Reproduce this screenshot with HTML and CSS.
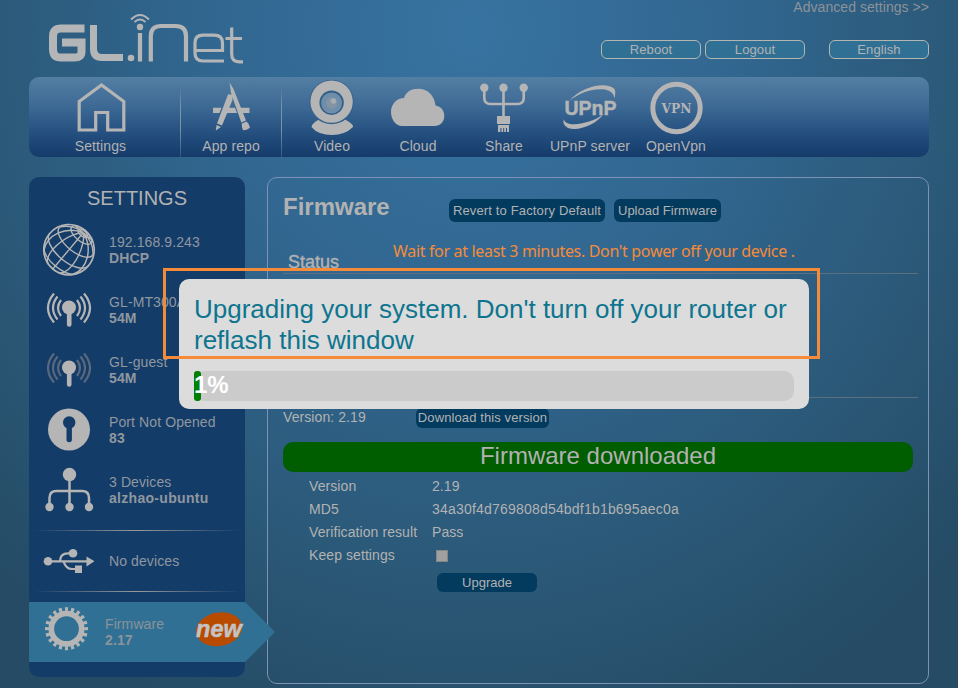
FILE: index.html
```html
<!DOCTYPE html>
<html lang="en">
<head>
<meta charset="utf-8">
<title>GL.iNet Firmware</title>
<link rel="stylesheet" href="styles.css">
</head>
<body>
<div class="page">
  <header class="header">
    <svg class="logo" viewBox="46 10 200 56" width="200" height="56" fill="none" stroke="#b4b5b6">
      <path stroke-width="8" d="M84.500 28.500H61Q53 28.500 53 37V49Q53 57.500 61 57.500H74Q81.500 57.500 81.500 51.500V42.500H62"/>
      <path stroke-width="7" d="M93.500 25V49Q93.500 57.500 102 57.500H123"/>
      <circle cx="131" cy="58" r="3.300" fill="#b4b5b6" stroke="none"/>
      <circle cx="140" cy="27" r="3.200" fill="#b4b5b6" stroke="none"/>
      <path stroke-width="4.200" d="M140 33V61.500M150.800 61.500V36Q150.800 26 161 26H175.500Q186 26 186 36V61.500"/>
      <path stroke-width="1.800" d="M131 19.500Q140 10.500 149 19.500M134.500 22Q140 17 145.500 22"/>
      <path stroke-width="3.200" d="M224 61H203Q195 61 195 53V43Q195 35.200 203 35.200H214Q222.500 35.200 222.500 43V50.500H195M231.700 27.500V54Q231.700 61.800 239 61.800H243M225.500 38.500H242"/>
    </svg>
    <div class="header-right">
      <a class="advanced">Advanced settings &gt;&gt;</a>
      <div class="top-buttons">
        <button class="outline-btn">Reboot</button>
        <button class="outline-btn">Logout</button>
        <button class="outline-btn language">English</button>
      </div>
    </div>
  </header>

  <nav class="nav">
    <a class="nav-item nav-settings">
      <svg viewBox="57 80 86 57" width="86" height="57"><path d="M78.200 130V101.500L100.500 85L122.800 101.500V130H106.700V112.500H94.700V130Z" fill="none" stroke="#b5b5b5" stroke-width="3.200"/></svg>
      <span>Settings</span>
    </a>
    <a class="nav-item nav-apps">
      <svg viewBox="188 80 86 57" width="86" height="57" fill="#b5b5b5"><path d="M213 107.800H221.500L219.500 113H213ZM227.500 107.800H235L237 113H225.500ZM240 107.800H249.500V113H242.200Z"/><path d="M228 94.500Q230.500 93.500 232.300 95.500L232.500 100L222 125.500L217 123.500ZM216.500 125L221 127L215.800 130.500ZM229.600 82.500L233.500 89L246 120.500L241.300 122.500L231 93ZM241.800 123.500L246.500 121.500Q249.500 124 250 127.500Q248 130 243 130.300Q241.500 128 241.800 123.500Z"/></svg>
      <span>App repo</span>
    </a>
    <a class="nav-item">
      <svg viewBox="289 80 86 57" width="86" height="57"><path d="M319 119.500Q332 127 345 119.500Q354 124.500 353 127Q345 135 332 135Q318 135 311.500 127Q312 123 319 119.500Z" fill="#b5b5b5"/><circle cx="331.600" cy="102" r="22.200" fill="#36618c"/><circle cx="331.600" cy="101.600" r="21.200" fill="#b5b5b5"/><circle cx="331.600" cy="102.700" r="12.200" fill="#315f89"/><circle cx="331.600" cy="103" r="10.500" fill="#708da9"/><circle cx="331.600" cy="103" r="5.500" fill="#8294a5"/><circle cx="333.500" cy="101" r="2.800" fill="#a7aeb3"/></svg>
      <span>Video</span>
    </a>
    <a class="nav-item">
      <svg viewBox="375 80 86 57" width="86" height="57"><path d="M402 126C395.500 126 391 119 391 112C391 104 397 98 404 98C406 92 411 88.800 418.500 88.800C428 88.800 434.500 96 435.500 105.500C441 106 444.300 111 444.300 116C444.300 122 440 126 434.500 126Z" fill="#b5b5b5"/></svg>
      <span>Cloud</span>
    </a>
    <a class="nav-item">
      <svg viewBox="461 80 86 57" width="86" height="57" fill="#b5b5b5"><circle cx="484.300" cy="87.700" r="4.200"/><circle cx="503.500" cy="87.700" r="4.200"/><circle cx="523.700" cy="87.700" r="4.200"/><path d="M484.300 90V98Q484.300 104 490.500 104H517.500Q523.700 104 523.700 98V90M503.500 90V117" fill="none" stroke="#b5b5b5" stroke-width="2.600"/><path d="M497 116H510V124H497ZM498 125H509V132H507V128H506V132H504.200V128H503.200V132H501.400V128H500.400V132H498Z"/></svg>
      <span>Share</span>
    </a>
    <a class="nav-item">
      <svg viewBox="547 80 86 57" width="86" height="57" fill="#b5b5b5"><path d="M569.500 101C580 87 606 80.500 614.500 89Q616 92 614.500 98.500Q614 91.500 605 89.500C593 88 580 92 569.500 101ZM563.800 119C565 126 578 125 589 121.500Q598 118.500 603.500 114C596 125 578 131.500 568 128Q562 125 563.800 119Z"/><text class="upnp" x="564.500" y="115" textLength="52" lengthAdjust="spacingAndGlyphs">UPnP</text></svg>
      <span>UPnP server</span>
    </a>
    <a class="nav-item">
      <svg viewBox="633 80 86 57" width="86" height="57" fill="#b5b5b5"><circle cx="676.500" cy="108" r="23.700" fill="none" stroke="#b5b5b5" stroke-width="5"/><text class="vpn" x="661.500" y="112.700" textLength="30" lengthAdjust="spacingAndGlyphs">VPN</text></svg>
      <span>OpenVpn</span>
    </a>
  </nav>

  <div class="columns">
    <aside class="sidebar">
      <h2>SETTINGS</h2>
      <div class="row">
        <svg viewBox="29 220 80 60" width="80" height="60">
          <g transform="translate(69 249.700) rotate(-50)" fill="none" stroke="#b5b5b5" stroke-width="1.400">
            <circle r="25.200" stroke-width="1.700"/>
            <ellipse cx="19.200" rx="5.900" ry="12.600"/>
            <ellipse cx="21.400" rx="2.800" ry="5.500"/>
            <path d="M11.100 -21.800A10.200 21.800 0 0 0 11.100 21.800M0 -25.200A11.800 25.200 0 0 0 0 25.200M-14.200 -20.800A10.200 21.800 0 0 0 -14.200 20.800M22.200 0H-25.200"/>
            <path id="meridians" d="M22.200 0Q19.500 3.400 14.100 6.300Q8.800 9.200 2.200 10.900Q-4.200 12.600 -10.200 12.600Q-16.200 12.600 -19.900 10.900Q-23.700 9.200 -24.300 6.300M22.200 0Q20.600 5.800 16.300 10.900Q11.900 15.900 6 18.900Q0 21.800 -5.900 21.800Q-11.800 21.800 -16.200 18.900M22.200 0Q22.200 6.800 19.200 12.600Q16.200 18.400 11.100 21.800M22.200 0L22.300 10.500"/>
            <use href="#meridians" transform="scale(1 -1)"/>
          </g>
        </svg>
        <p>192.168.9.243<b>DHCP</b></p>
      </div>
      <div class="row">
        <svg viewBox="29 280 80 60" width="80" height="60" fill="none" stroke="#b5b5b5" stroke-width="2.200"><g><path d="M54 293.500Q42 308 54 322.500M57.500 296.500Q48.500 308 57.500 319.500M61 300Q55 308 61 316M84 293.500Q96 308 84 322.500M80.500 296.500Q89.500 308 80.500 319.500M77 300Q83 308 77 316"/></g><circle cx="69" cy="307.500" r="7" fill="#b5b5b5" stroke="none"/><path d="M69.200 309V324.500" stroke-width="4.600" stroke-linecap="round"/></svg>
        <p>GL-MT300A<b>54M</b></p>
      </div>
      <div class="row">
        <svg viewBox="29 280 80 60" width="80" height="60" fill="none" stroke="#b5b5b5" stroke-width="2.200"><g stroke="#58687d"><path d="M54 293.500Q42 308 54 322.500M57.500 296.500Q48.500 308 57.500 319.500M61 300Q55 308 61 316M84 293.500Q96 308 84 322.500M80.500 296.500Q89.500 308 80.500 319.500M77 300Q83 308 77 316"/></g><circle cx="69" cy="307.500" r="7" fill="#b5b5b5" stroke="none"/><path d="M69.200 309V324.500" stroke-width="4.600" stroke-linecap="round"/></svg>
        <p>GL-guest<b>54M</b></p>
      </div>
      <div class="row">
        <svg viewBox="29 400 80 60" width="80" height="60"><circle cx="69" cy="429.500" r="21" fill="#b5b5b5"/><circle cx="69.200" cy="422.500" r="6.200" fill="#143c69"/><path d="M69.200 424V439.500" stroke="#143c69" stroke-width="5.400" stroke-linecap="round"/></svg>
        <p>Port Not Opened<b>83</b></p>
      </div>
      <div class="row">
        <svg viewBox="29 460 80 60" width="80" height="60" fill="#b5b5b5"><circle cx="69.500" cy="474.500" r="6.700"/><circle cx="49.500" cy="507" r="4.200"/><circle cx="69.500" cy="507" r="4.200"/><circle cx="89" cy="507" r="4.200"/><path d="M69.500 475V506M49.500 506V498Q49.500 491 56.500 491H82Q89 491 89 498V506" fill="none" stroke="#b5b5b5" stroke-width="2.500"/></svg>
        <p>3 Devices<b class="host">alzhao-ubuntu</b></p>
      </div>
      <div class="rule rule-first"></div>
      <div class="row usb">
        <svg viewBox="29 531 80 60" width="80" height="60" fill="#b5b5b5"><circle cx="48" cy="561.300" r="4.300"/><circle cx="73" cy="553.300" r="4.300"/><path d="M75 565.500H82V573H75ZM86.500 556.500L94.500 561.300L86.500 566.500Z"/><path d="M48 561.300H88M60 561.300C60 556 63 553.300 68 553.300H72M63.500 561.300C65 566 67 569 72 569H76" fill="none" stroke="#b5b5b5" stroke-width="2.200"/></svg>
        <p>No devices</p>
      </div>
      <div class="rule"></div>
      <div class="row active">
        <svg viewBox="29 602 76 60" width="76" height="60" fill="none" stroke="#b5b5b5"><circle cx="66.500" cy="628.700" r="15.200" stroke-width="5.600"/><circle cx="66.500" cy="628.700" r="19.300" pathLength="120" stroke-width="4.400" stroke-dasharray="3 3" stroke-dashoffset="1.500"/></svg>
        <p>Firmware<b>2.17</b></p>
        <svg class="new" viewBox="193 610 52 38" width="52" height="38"><ellipse cx="219" cy="629.300" rx="23.300" ry="16.700" transform="rotate(-10 219 629.300)" fill="#b94b00"/><text class="new-text" x="196" y="637" textLength="46" lengthAdjust="spacingAndGlyphs">new</text></svg>
      </div>
    </aside>

    <main class="panel">
      <div class="title-line">
        <h1>Firmware</h1>
        <button class="btn revert">Revert to Factory Default</button>
        <button class="btn upload">Upload Firmware</button>
      </div>
      <div class="status-line">
        <h3>Status</h3>
        <span class="warning">Wait for at least 3 minutes. Don't power off your device .</span>
      </div>
      <div class="section"></div>
      <div class="version-line"><span>Version: 2.19</span><button class="btn download">Download this version</button></div>
      <div class="downloaded">Firmware downloaded</div>
      <dl class="details">
        <dt>Version</dt><dd>2.19</dd>
        <dt>MD5</dt><dd class="md5">34a30f4d769808d54bdf1b1b695aec0a</dd>
        <dt>Verification result</dt><dd>Pass</dd>
        <dt>Keep settings</dt><dd><i class="check"></i></dd>
      </dl>
      <button class="btn upgrade">Upgrade</button>
    </main>
  </div>
</div>

<div class="dialog">
  <p>Upgrading your system. Don't turn off your router or<br>reflash this window</p>
  <div class="progress"><div class="bar"></div><span>1%</span></div>
</div>
<div class="highlight"></div>
</body>
</html>
```
FILE: styles.css
```css
* { box-sizing: border-box; }
body {
  margin: 0;
  width: 958px;
  height: 688px;
  overflow: hidden;
  position: relative;
  font: 14px/16px "Liberation Sans", sans-serif;
  color: #b2b2b2;
  background: radial-gradient(ellipse 680px 750px at 470px 30px, #3773a1 0%, #31668f 40%, #2a5775 76%, #254b65 100%);
}
h1, h2, h3, p, dl, dd { margin: 0; }
button { font: inherit; color: inherit; padding: 0; border: 0; white-space: nowrap; }
svg { display: block; flex: none; }
.page { width: 900px; margin-left: 29px; }

.header { height: 77px; display: flex; justify-content: space-between; }
.logo { margin: 10px 0 0 17px; }
.header-right { display: flex; flex-direction: column; align-items: flex-end; }
.advanced { height: 16px; margin-top: -1px; color: #8c9297; letter-spacing: .05px; }
.top-buttons { display: flex; gap: 4px; margin-top: 25px; }
.outline-btn {
  width: 100px; height: 19px; font-size: 13px; line-height: 16px;
  border: 1px solid #b4b6b2; border-radius: 6px; background: #317095; letter-spacing: .1px;
}
.language { margin-left: 20px; }

.nav {
  height: 80px; border-radius: 10px; display: flex;
  background: linear-gradient(#537fa3, #3c6894 38%, #204b7b 76%, #153b6a);
}
.nav-item { width: 86px; height: 80px; padding-top: 3px; display: flex; flex-direction: column; align-items: center; }
.nav-item span { margin-top: 1px; white-space: nowrap; letter-spacing: .1px; }
.nav-settings { width: 151px; padding-right: 8px; }
.nav-apps {
  width: 102px; margin-right: 7px;
  background:
    linear-gradient(transparent 12%, #7b93a8 35%, #7b93a8 65%, #31587f) 0 0 / 1px 100% no-repeat,
    linear-gradient(transparent 12%, #7b93a8 35%, #7b93a8 65%, #31587f) 100% 0 / 1px 100% no-repeat;
}
.upnp { font: bold 20px "Liberation Sans", sans-serif; stroke: #b5b5b5; stroke-width: .5px; }
.vpn { font: bold 12.500px "DejaVu Serif", serif; }

.columns { display: flex; gap: 22px; margin-top: 20px; }
.sidebar { width: 216px; height: 500px; background: #143c69; border-radius: 10px; color: #8f979f; }
.sidebar h2 { height: 43px; font-size: 20px; line-height: 42px; font-weight: normal; text-align: center; color: #b2b2b2; }
.row { height: 60px; display: flex; align-items: center; white-space: nowrap; letter-spacing: .1px; }
.row p { padding-bottom: 1px; }
.row b { display: block; }
.row .host { letter-spacing: .3px; }
.rule { height: 1px; margin: 0 5px; background: linear-gradient(90deg, transparent, #9a9a9a 50%, transparent); }
.rule-first { margin-top: 10px; }
.active { margin-top: 10px; background: #317095; position: relative; color: #8a9399; }
.active::after {
  content: ""; position: absolute; left: 216px; top: 0;
  border: solid transparent; border-width: 30px 0 30px 30px; border-left-color: #317095;
}
.new { margin: -6px 0 0 auto; }
.new-text { font: italic bold 24px "Liberation Sans", sans-serif; fill: #c3c3c3; stroke: #c3c3c3; stroke-width: .5px; }

.panel { width: 662px; height: 507px; border: 1px solid #7d92b4; border-radius: 10px; padding: 0 10px 0 15px; }
.title-line { display: flex; height: 60px; padding-top: 14px; }
.title-line h1 { width: 166px; font-size: 24px; line-height: 30px; }
.btn { background: #033b5f; border-radius: 6px; }
.revert { width: 156px; height: 23px; margin: 7px 9px 0 0; font-size: 13px; letter-spacing: .15px; }
.upload { width: 107px; height: 23px; margin-top: 7px; font-size: 13px; }
.status-line { display: flex; height: 36px; padding-left: 5px; border-bottom: 1px solid #5b6f80; }
.status-line h3 { width: 105px; padding-top: 14px; font-size: 18px; line-height: 20px; font-weight: normal; -webkit-text-stroke: .4px #b2b2b2; }
.warning { padding-top: 3px; font: 16px/20px "Noto Sans", sans-serif; letter-spacing: -.33px; color: #f58b39; white-space: nowrap; }
.section { height: 124px; border-bottom: 1px solid #5b6f80; }
.version-line { display: flex; height: 44px; padding-top: 11px; }
.version-line span { width: 133px; letter-spacing: .08px; }
.download { width: 133px; height: 20px; margin-top: -1px; font-size: 13px; letter-spacing: .1px; }
.downloaded { width: 630px; height: 30px; border-radius: 10px; background: #005d00; font-size: 24px; line-height: 28px; text-align: center; }
.details { display: grid; grid-template-columns: 123px 1fr; grid-auto-rows: 23px; line-height: 23px; margin: 3px 0 0 26px; letter-spacing: .08px; }
.md5 { letter-spacing: .2px; }
.check { display: block; width: 12px; height: 12px; margin: 6px 0 0 4px; background: #a0a0a0; border: 1px solid #858585; }
.upgrade { display: block; width: 100px; height: 19px; margin: 6px 0 0 154px; font-size: 13px; }

.dialog {
  position: absolute; left: 179px; top: 279px; width: 630px; height: 130px;
  padding: 15px; border-radius: 10px; background: #dcdcdc; color: #0d758f;
}
.dialog p { font-size: 26px; line-height: 31px; white-space: nowrap; }
.progress { height: 30px; margin-top: 15px; border-radius: 10px; background: #cbcbcb; display: grid; }
.bar { grid-area: 1 / 1; width: 7px; height: 30px; border-radius: 3px; background: #008000; }
.progress span { grid-area: 1 / 1; color: #fff; font-size: 24px; font-weight: bold; line-height: 28px; }
.highlight { position: absolute; left: 163px; top: 268px; width: 657px; height: 91px; border: 3px solid #f58b39; }
```
